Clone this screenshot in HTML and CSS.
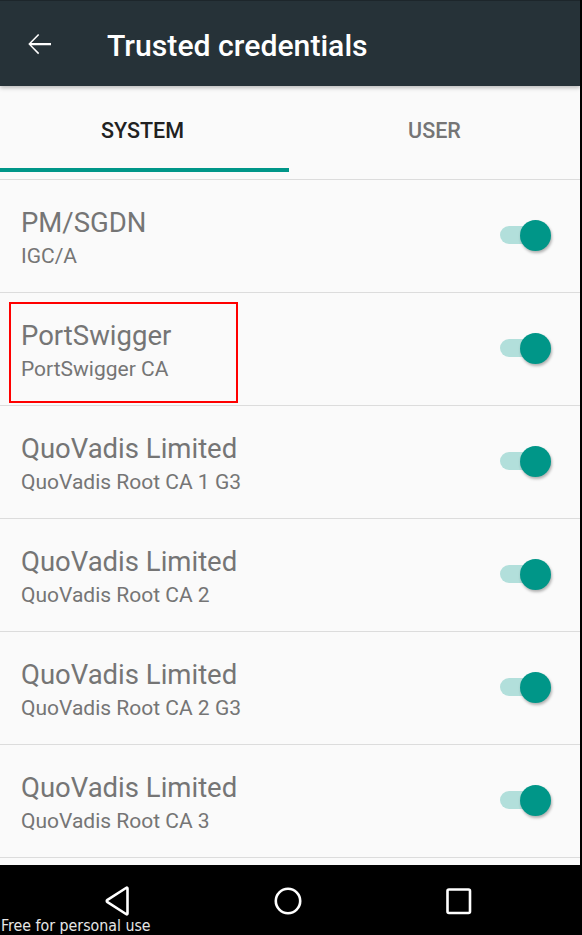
FILE: index.html
```html
<!DOCTYPE html>
<html>
<head>
<meta charset="utf-8">
<link rel="stylesheet" href="styles.css">
</head>
<body>
<div class="screen">
  <header class="appbar">
    <svg class="back" width="36" height="36" viewBox="0 0 24 24"><path d="M20 11.25H6.9l5.25-5.25-.75-.75L4.85 12l6.55 6.75.75-.75-5.25-5.25H20z" fill="#fff"/></svg>
    <h1 class="title">Trusted credentials</h1>
  </header>
  <nav class="tabs">
    <div class="tab active">SYSTEM</div>
    <div class="tab">USER</div>
  </nav>
  <ul class="list">
    <li class="row"><div class="text"><div class="name">PM/SGDN</div><div class="sub">IGC/A</div></div><span class="switch"><span class="thumb"></span></span></li>
    <li class="row marked"><div class="text"><div class="name">PortSwigger</div><div class="sub">PortSwigger CA</div></div><span class="switch"><span class="thumb"></span></span><span class="redbox"></span></li>
    <li class="row"><div class="text"><div class="name">QuoVadis Limited</div><div class="sub">QuoVadis Root CA 1 G3</div></div><span class="switch"><span class="thumb"></span></span></li>
    <li class="row"><div class="text"><div class="name">QuoVadis Limited</div><div class="sub">QuoVadis Root CA 2</div></div><span class="switch"><span class="thumb"></span></span></li>
    <li class="row"><div class="text"><div class="name">QuoVadis Limited</div><div class="sub">QuoVadis Root CA 2 G3</div></div><span class="switch"><span class="thumb"></span></span></li>
    <li class="row"><div class="text"><div class="name">QuoVadis Limited</div><div class="sub">QuoVadis Root CA 3</div></div><span class="switch"><span class="thumb"></span></span></li>
  </ul>
  <footer class="navbar">
    <svg class="nav-back" width="30" height="32" viewBox="0 0 30 32"><path d="M23.5 3.5 L23.5 28.5 Q23.5 30 22 29 L3.5 17.2 Q2 16 3.5 14.8 L22 3 Q23.5 2 23.5 3.5 Z" fill="none" stroke="#fff" stroke-width="2.6" stroke-linejoin="round"/></svg>
    <svg class="nav-home" width="30" height="30" viewBox="0 0 30 30"><circle cx="15" cy="15" r="12.2" fill="none" stroke="#fff" stroke-width="2.6"/></svg>
    <svg class="nav-recent" width="26" height="27" viewBox="0 0 26 27"><rect x="1.5" y="1.5" width="22.5" height="23.5" rx="1.5" fill="none" stroke="#fff" stroke-width="2.6"/></svg>
    <span class="watermark">Free for personal use</span>
  </footer>
</div>
</body>
</html>
```

FILE: styles.css
```css
* { box-sizing: border-box; }
html, body { margin: 0; padding: 0; background: #000; }
.screen {
  width: 582px;
  height: 935px;
  display: flex;
  flex-direction: column;
  background: #000;
  font-family: Roboto, "Noto Sans", sans-serif;
  overflow: hidden;
}
.appbar {
  height: 86px;
  width: 580px;
  background: #263238;
  border-top: 1px solid #1d262b;
  display: flex;
  align-items: center;
  padding-left: 21px;
  position: relative;
  z-index: 2;
  box-shadow: 0 2px 4px rgba(0,0,0,0.25);
}
.back { margin-top: 1px; flex: none; }
.title {
  margin: 0 0 0 50px;
  color: #fff;
  font-weight: 500;
  font-size: 30.2px;
  letter-spacing: 0;
  margin-top: 3px;
}
.tabs {
  width: 580px;
  height: 94px;
  background: #fafafa;
  display: flex;
  padding-bottom: 7px;
  border-bottom: 1px solid #dcdcdc;
}
.tab {
  flex: 1;
  display: flex;
  align-items: center;
  justify-content: center;
  font-size: 21.5px;
  font-weight: 500;
  color: #757575;
  border-bottom: 4px solid transparent;
  padding-top: 6px;
}
.tab.active {
  color: #212121;
  border-bottom-color: #009688;
  flex: 0 0 289px;
  padding-right: 4px;
}
.list {
  list-style: none;
  margin: 0;
  padding: 0 0 6px 0;
  width: 580px;
  background: #fafafa;
  flex: 1;
}
.row {
  height: 113px;
  border-bottom: 1px solid #dcdcdc;
  display: flex;
  align-items: center;
  padding-left: 21px;
  position: relative;
}
.text { flex: 1; margin-top: 4px; }
.name {
  font-size: 27.5px;
  color: #757575;
  line-height: 32px;
}
.sub {
  font-size: 21px;
  color: #757575;
  line-height: 28px;
  margin-top: 3px;
}
.switch {
  position: relative;
  width: 48px;
  height: 18px;
  border-radius: 9px;
  background: #b2dfdb;
  margin-right: 32px;
  margin-top: -2px;
}
.thumb {
  position: absolute;
  right: -3px;
  top: -6.5px;
  width: 31px;
  height: 31px;
  border-radius: 50%;
  background: #009688;
  box-shadow: 1px 2px 3px rgba(0,0,0,0.3);
}
.redbox {
  position: absolute;
  left: 9px;
  top: 9px;
  width: 229px;
  height: 101px;
  border: 2px solid #ff0000;
}
.navbar {
  height: 70px;
  background: #000;
  position: relative;
  flex: none;
}
.nav-back { position: absolute; left: 104px; top: 20px; }
.nav-home { position: absolute; left: 273px; top: 21px; }
.nav-recent { position: absolute; left: 446px; top: 23px; }
.watermark {
  position: absolute;
  left: 1px;
  bottom: 0px;
  color: #e6e6e6;
  font-family: "DejaVu Sans Condensed", "DejaVu Sans", sans-serif;
  font-weight: 200;
  font-size: 15.8px;
  line-height: 19px;
}
```
